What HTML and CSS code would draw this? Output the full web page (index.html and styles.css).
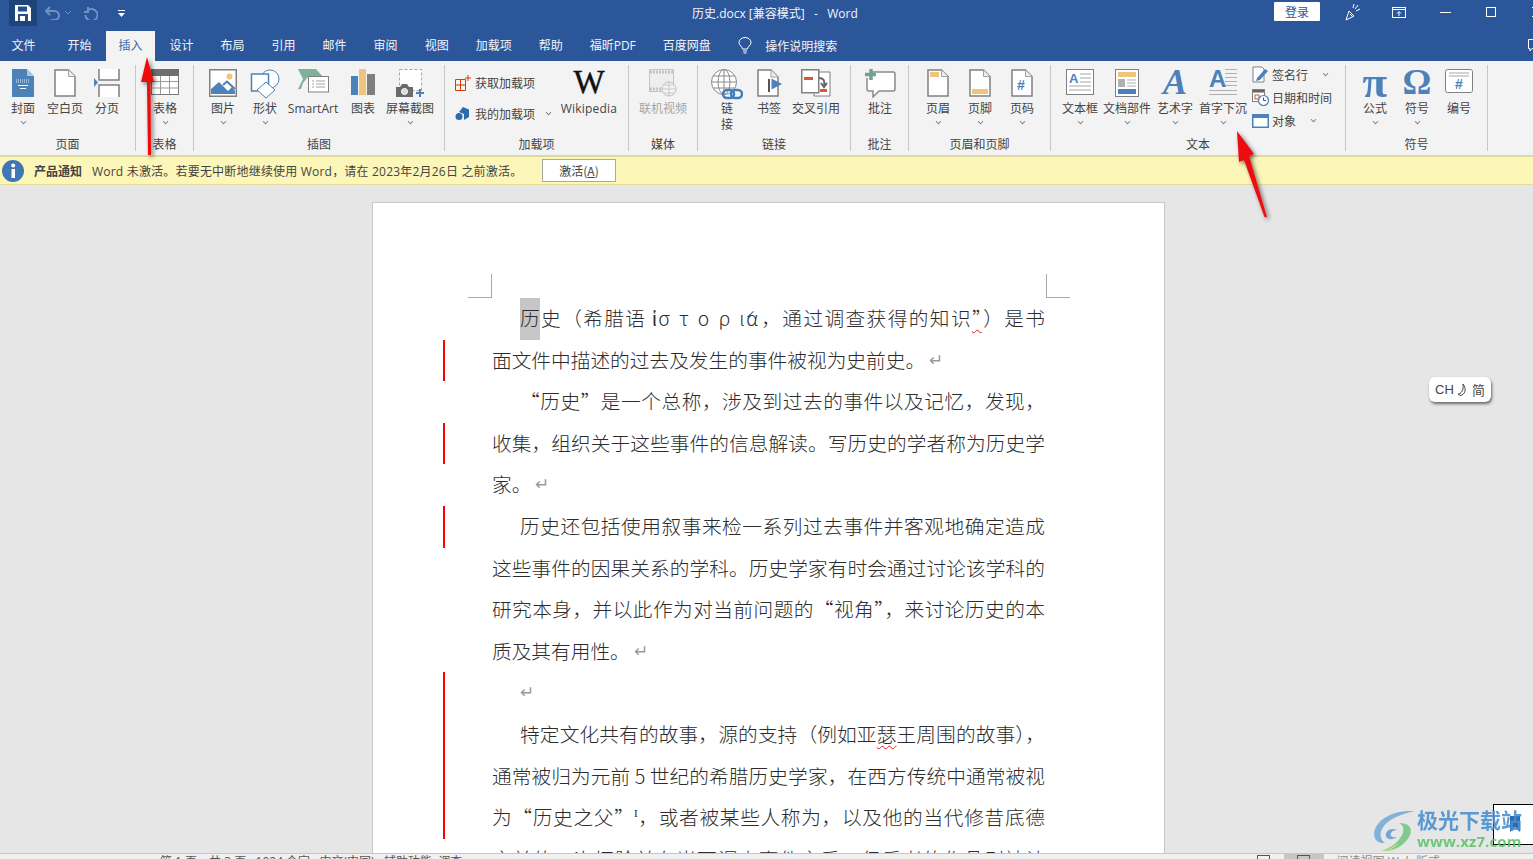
FILE: index.html
```html
<!DOCTYPE html>
<html lang="zh-CN">
<head>
<meta charset="utf-8">
<title>历史.docx [兼容模式] - Word</title>
<link rel="stylesheet" href="styles.css">
</head>
<body>
<div class="app">
  <header class="titlebar">
    <div class="qat">
      <div class="save">
        <svg width="16" height="16" viewBox="0 0 16 16"><path d="M0 0H13L16 3V16H0Z" fill="#fff"/><rect x="3" y="1.500" width="9" height="5" fill="#24508c"/><rect x="3" y="9" width="10" height="7" fill="#24508c"/><rect x="5" y="11" width="5" height="5" fill="#fff"/></svg>
      </div>
      <svg class="q-undo" width="15" height="14" viewBox="0 0 15 14"><path d="M5 1L1 5L5 9M1 5H9C12 5 14 7 14 9.500S12 14 9 14H6" fill="none" stroke="#7391bd" stroke-width="2"/></svg>
      <svg class="q-drop" width="6" height="4" viewBox="0 0 6 4"><path d="M0 0L3 3L6 0" fill="none" stroke="#7391bd"/></svg>
      <svg class="q-redo" width="14" height="14" viewBox="0 0 14 14"><path d="M4 1V6H0M3 5A6 6 0 1 1 1.500 9" fill="none" stroke="#7391bd" stroke-width="2"/></svg>
      <svg class="q-custom" width="7" height="7" viewBox="0 0 7 7"><rect width="7" height="1" fill="#fff"/><path d="M0 3H7L3.500 7Z" fill="#fff"/></svg>
    </div>
    <div class="doc-title">历史.docx [兼容模式]&nbsp;&nbsp; - &nbsp;&nbsp;Word</div>
    <div class="win">
      <button class="login">登录</button>
      <span class="wctl"><svg width="16" height="18" viewBox="0 0 16 18"><path d="M1 17L4 8L9 13Z" fill="none" stroke="#fff"/><path d="M5 11L7 13M10 6L13 2M11 8L15 6M8 5L9 1" stroke="#fff"/></svg></span>
      <span class="wctl"><svg width="14" height="11" viewBox="0 0 14 11"><rect x=".5" y=".5" width="13" height="10" fill="none" stroke="#fff"/><path d="M1 2.500H13" stroke="#fff"/><path d="M7 9V5M5 6.500L7 4.500L9 6.500" fill="none" stroke="#fff"/></svg></span>
      <span class="wctl"><svg width="11" height="1" viewBox="0 0 11 1"><rect width="11" height="1" fill="#fff"/></svg></span>
      <span class="wctl"><svg width="10" height="10" viewBox="0 0 10 10"><rect x=".5" y=".5" width="9" height="9" fill="none" stroke="#fff"/></svg></span>
      <span class="wctl"><svg width="10" height="10" viewBox="0 0 10 10"><path d="M0 0L10 10M10 0L0 10" stroke="#fff"/></svg></span>
    </div>
  </header>

  <nav class="tabs">
    <span class="tab tab-file">文件</span>
    <span class="tab">开始</span>
    <span class="tab active">插入</span>
    <span class="tab">设计</span>
    <span class="tab">布局</span>
    <span class="tab">引用</span>
    <span class="tab">邮件</span>
    <span class="tab">审阅</span>
    <span class="tab">视图</span>
    <span class="tab">加载项</span>
    <span class="tab">帮助</span>
    <span class="tab">福昕PDF</span>
    <span class="tab">百度网盘</span>
    <span class="search">
      <svg width="14" height="17" viewBox="0 0 14 17"><path d="M4.500 12C4.500 9.500 1 8.500 1 5.500A6 5 0 0 1 13 5.500C13 8.500 9.500 9.500 9.500 12Z" fill="none" stroke="#fff"/><path d="M5 14H9M5.500 16H8.500" stroke="#fff"/></svg>
      操作说明搜索
    </span>
    <svg class="share" width="10" height="13" viewBox="0 0 10 13"><path d="M.5 .5H9.500V9.500H4L2 12V9.500H.5Z" fill="none" stroke="#fff"/></svg>
  </nav>

  <section class="ribbon">
    <div class="group g-pages">
      <div class="items">
        <div class="btn w42"><svg class="ico" width="22" height="28" viewBox="0 0 22 28"><path d="M0 0H15L22 7V28H0Z" fill="#4d82b8"/><path d="M15.500 0L22 6.500H15.500Z" fill="#a9c4df" stroke="#f3f3f3" stroke-width=".5"/><path d="M4 11H18M4 13H18" stroke="#dfe9f3" stroke-dasharray="1 1"/><path d="M6 16.500H16M8 19.500H14" stroke="#fff"/></svg><span class="lbl">封面</span><i class="chev"></i></div>
        <div class="btn w42"><svg class="ico" width="22" height="28" viewBox="0 0 22 28"><path d="M1 1H14.500L21 7.500V27H1Z" fill="#fff" stroke="#808080" stroke-width="1.500"/><path d="M14.500 1V7.500H21" fill="#eee" stroke="#a0a0a0"/></svg><span class="lbl">空白页</span></div>
        <div class="btn w42"><svg class="ico" width="26" height="28" viewBox="0 0 26 28"><path d="M5 0V11H25V0" fill="#fff" stroke="#808080" stroke-width="1.500"/><path d="M5 28V16H25V28" fill="#fff" stroke="#808080" stroke-width="1.500"/><path d="M0 9L4 13.500L0 18Z" fill="#4d82b8"/></svg><span class="lbl">分页</span></div>
      </div>
      <div class="gname">页面</div>
    </div>

    <div class="group g-table">
      <div class="items">
        <div class="btn w56"><svg class="ico" width="28" height="26" viewBox="0 0 28 26"><rect x=".5" y=".5" width="27" height="25" fill="#fff" stroke="#7a7a7a"/><rect width="28" height="7" fill="#6e6e6e"/><path d="M1 12.500H27M1 19H27M9.500 7V25M18.500 7V25" stroke="#9a9a9a"/></svg><span class="lbl">表格</span><i class="chev"></i></div>
      </div>
      <div class="gname">表格</div>
    </div>

    <div class="group g-illus">
      <div class="items">
        <div class="btn w42"><svg class="ico" width="28" height="28" viewBox="0 0 28 28"><rect x=".75" y=".75" width="26.500" height="26.500" fill="#fff" stroke="#808080" stroke-width="1.500"/><circle cx="20.500" cy="7.500" r="3" fill="#efc47d"/><path d="M2 25V20L10 13L19 22L23 18L26 22V25Z" fill="#4d82b8"/><path d="M14 16L18 12.500L26 20" fill="none" stroke="#4d82b8" stroke-width="2"/></svg><span class="lbl">图片</span><i class="chev"></i></div>
        <div class="btn w42"><svg class="ico" width="30" height="30" viewBox="0 0 30 30"><circle cx="20" cy="10" r="9" fill="#fff" stroke="#4d82b8"/><rect x="1.500" y="5" width="17" height="17" fill="#fff" stroke="#4d82b8" stroke-width="1.500"/><path d="M16 13L25 21L16 29L7 21Z" fill="#fff" stroke="#4d82b8"/></svg><span class="lbl">形状</span><i class="chev"></i></div>
        <div class="btn w54"><svg class="ico" width="31" height="24" viewBox="0 0 31 24"><path d="M0 0H18L25 8H10L5 14L3 20H0L5 10Z" fill="#7fb09b"/><rect x="10.500" y="7.500" width="20" height="15.500" fill="#fff" stroke="#808080"/><path d="M14 12H16M18 12H27M14 15H16M18 15H27M14 18H16M18 18H27" stroke="#a0a0a0"/></svg><span class="lbl">SmartArt</span></div>
        <div class="btn w46"><svg class="ico" width="24" height="26" viewBox="0 0 24 26"><rect y="7" width="7" height="19" fill="#4d82b8"/><rect x="8" width="7" height="26" fill="#efc47d"/><rect x="16" y="5" width="8" height="21" fill="#7f7f7f"/></svg><span class="lbl">图表</span></div>
        <div class="btn w48"><svg class="ico" width="30" height="29" viewBox="0 0 30 29"><rect x="4.500" y=".5" width="22" height="21" fill="#fff" stroke="#a6a6a6" stroke-dasharray="3 2"/><path d="M1 18H5L7 15H12L14 18H18V28H1Z" fill="#6b6b6b"/><circle cx="9.500" cy="22.500" r="3" fill="#d8d8d8" stroke="#fff"/><path d="M25 20V28M21 24H29" stroke="#4d82b8" stroke-width="2"/></svg><span class="lbl">屏幕截图</span><i class="chev"></i></div>
      </div>
      <div class="gname">插图</div>
    </div>

    <div class="group g-addin">
      <div class="items">
        <div class="smallcol">
          <div class="sm"><svg width="16" height="16" viewBox="0 0 16 16"><path d="M.5 4.500H10.500V15.500H.5ZM.5 10H10.500M5.500 4.500V15.500" fill="none" stroke="#d83b01"/><path d="M13 0V6M10 3H16" stroke="#d83b01"/></svg><span>获取加载项</span></div>
          <div class="sm"><svg width="16" height="16" viewBox="0 0 16 16"><path d="M8 1L14 3.500V11L9 14V8L4 6Z" fill="#2b6cb0"/><circle cx="4" cy="10.500" r="3.500" fill="#2b6cb0"/></svg><span>我的加载项</span><i class="chev inline"></i></div>
        </div>
        <div class="btn w70 wiki"><span class="ico-t w-glyph">W</span><span class="lbl">Wikipedia</span></div>
      </div>
      <div class="gname">加载项</div>
    </div>

    <div class="group g-media">
      <div class="items">
        <div class="btn w56 off"><svg class="ico" width="28" height="28" viewBox="0 0 28 28"><rect x=".5" y=".5" width="24" height="22" fill="#eee" stroke="#c4c4c4"/><path d="M1 3H24M1 20H24" stroke="#c4c4c4" stroke-width="3" stroke-dasharray="2 1"/><circle cx="20" cy="20" r="7" fill="#f3f3f3" stroke="#c0c0c0"/><path d="M13 20H27M20 13V27M15 16H25M15 24H25" stroke="#c0c0c0" stroke-width=".8"/></svg><span class="lbl">联机视频</span></div>
      </div>
      <div class="gname">媒体</div>
    </div>

    <div class="group g-links">
      <div class="items">
        <div class="btn w42"><svg class="ico" width="32" height="31" viewBox="0 0 32 31"><circle cx="13" cy="13" r="12.500" fill="#fff" stroke="#8a8a8a"/><ellipse cx="13" cy="13" rx="6" ry="12.500" fill="none" stroke="#8a8a8a"/><path d="M.5 13H25.500M2 7H24M2 19H24M13 0V26" stroke="#8a8a8a"/><rect x="12" y="21" width="11" height="8" rx="4" fill="none" stroke="#3f7fbc" stroke-width="2.500"/><rect x="20" y="21" width="11" height="8" rx="4" fill="none" stroke="#3f7fbc" stroke-width="2.500"/></svg><span class="lbl">链<br>接</span></div>
        <div class="btn w42"><svg class="ico" width="25" height="28" viewBox="0 0 25 28"><path d="M1 1H14L21 8V27H1Z" fill="#fff" stroke="#808080" stroke-width="1.500"/><path d="M14 1V8H21" fill="#eee" stroke="#a0a0a0"/><rect x="11" y="10" width="2" height="13" fill="#555"/><path d="M14.500 9.500L25 15L14.500 20.500Z" fill="#4d82b8"/></svg><span class="lbl">书签</span></div>
        <div class="btn w52"><svg class="ico" width="30" height="28" viewBox="0 0 30 28"><path d="M13 3H29V27H13Z" fill="#fff" stroke="#808080"/><rect x=".75" y=".75" width="17" height="23" fill="#fff" stroke="#808080" stroke-width="1.500"/><rect x="3" y="8" width="9" height="3" fill="#d9573a"/><rect x="19" y="20" width="7" height="3" fill="#d9573a"/><path d="M18 9C23 9 24 12 23 17M20 14L23 18L26 14" fill="none" stroke="#666" stroke-width="2"/></svg><span class="lbl">交叉引用</span></div>
      </div>
      <div class="gname">链接</div>
    </div>

    <div class="group g-comment">
      <div class="items">
        <div class="btn w56"><svg class="ico" width="31" height="29" viewBox="0 0 31 29"><path d="M7 3H28Q30 3 30 5V20Q30 22 28 22H14L8 28V22H4Q2 22 2 20V9" fill="#fff" stroke="#8a8a8a" stroke-width="1.500"/><path d="M6 0V11M0 5.500H11" stroke="#6fa38c" stroke-width="3.500"/></svg><span class="lbl">批注</span></div>
      </div>
      <div class="gname">批注</div>
    </div>

    <div class="group g-hf">
      <div class="items">
        <div class="btn w42"><svg class="ico" width="22" height="28" viewBox="0 0 22 28"><path d="M1 1H14.500L21 7.500V27H1Z" fill="#fff" stroke="#808080" stroke-width="1.500"/><path d="M14.500 1V7.500H21" fill="#eee" stroke="#a0a0a0"/><rect x="3" y="3" width="9" height="5" fill="#efc47d"/></svg><span class="lbl">页眉</span><i class="chev"></i></div>
        <div class="btn w42"><svg class="ico" width="22" height="28" viewBox="0 0 22 28"><path d="M1 1H14.500L21 7.500V27H1Z" fill="#fff" stroke="#808080" stroke-width="1.500"/><path d="M14.500 1V7.500H21" fill="#eee" stroke="#a0a0a0"/><rect x="3" y="20" width="16" height="5" fill="#efc47d"/></svg><span class="lbl">页脚</span><i class="chev"></i></div>
        <div class="btn w42"><svg class="ico" width="22" height="28" viewBox="0 0 22 28"><path d="M1 1H14.500L21 7.500V27H1Z" fill="#fff" stroke="#808080" stroke-width="1.500"/><path d="M14.500 1V7.500H21" fill="#eee" stroke="#a0a0a0"/><text x="10" y="21" class="hash">#</text></svg><span class="lbl">页码</span><i class="chev"></i></div>
      </div>
      <div class="gname">页眉和页脚</div>
    </div>

    <div class="group g-text">
      <div class="items">
        <div class="btn w44"><svg class="ico" width="28" height="26" viewBox="0 0 28 26"><rect x=".5" y=".5" width="27" height="25" fill="#fff" stroke="#808080"/><text x="3" y="14" class="boxa">A</text><path d="M14 5H25M14 9H25M14 13H25M3 17H25M3 21H25" stroke="#a6a6a6"/></svg><span class="lbl">文本框</span><i class="chev"></i></div>
        <div class="btn w50"><svg class="ico" width="24" height="28" viewBox="0 0 24 28"><rect x=".5" y=".5" width="23" height="27" fill="#fff" stroke="#808080"/><rect x="3" y="3" width="18" height="5" fill="#efc47d"/><rect x="3" y="10" width="7" height="8" fill="#b0b0b0"/><path d="M12 11H21M12 14H21M12 17H21" stroke="#b0b0b0"/><rect x="3" y="20" width="18" height="5" fill="#4d82b8"/></svg><span class="lbl">文档部件</span><i class="chev"></i></div>
        <div class="btn w46 art"><span class="ico-t art-a">A</span><span class="lbl">艺术字</span><i class="chev"></i></div>
        <div class="btn w50 drop"><span class="ico-t drop-a"><span class="drop-l">A</span></span><span class="lbl">首字下沉</span><i class="chev"></i></div>
        <div class="smallcol tight">
          <div class="sm"><svg width="17" height="17" viewBox="0 0 17 17"><path d="M1 1H10L12 3V16H1Z" fill="#fff" stroke="#808080"/><path d="M5 12L13 3L16 5L8 14L4 15Z" fill="#4d82b8"/></svg><span>签名行</span><i class="chev inline wide"></i></div>
          <div class="sm"><svg width="17" height="17" viewBox="0 0 17 17"><rect x=".5" y=".5" width="12" height="12" fill="#fff" stroke="#808080"/><rect x="1" y="1" width="11" height="2.500" fill="#666"/><rect x="3" y="6" width="4" height="4" fill="none" stroke="#d9573a"/><circle cx="11.500" cy="11.500" r="5" fill="#fff" stroke="#4d82b8" stroke-width="1.200"/><path d="M11.500 8.500V11.500H14" fill="none" stroke="#555"/></svg><span>日期和时间</span></div>
          <div class="sm"><svg width="17" height="14" viewBox="0 0 17 14"><rect x=".75" y=".75" width="15.500" height="12.500" fill="#fff" stroke="#4d82b8" stroke-width="1.500"/><rect y="0" width="17" height="4" fill="#4d82b8"/></svg><span>对象</span><i class="chev inline wide"></i></div>
        </div>
      </div>
      <div class="gname">文本</div>
    </div>

    <div class="group g-symbol">
      <div class="items">
        <div class="btn w42"><span class="ico-t sym pi">π</span><span class="lbl">公式</span><i class="chev"></i></div>
        <div class="btn w42"><span class="ico-t sym">Ω</span><span class="lbl">符号</span><i class="chev"></i></div>
        <div class="btn w42"><svg class="ico" width="28" height="24" viewBox="0 0 28 24"><rect x=".5" y=".5" width="27" height="23" rx="2" fill="#fff" stroke="#808080"/><path d="M4 4H24M4 7H24" stroke="#a6a6a6"/><text x="14" y="20" class="hash">#</text></svg><span class="lbl">编号</span></div>
      </div>
      <div class="gname">符号</div>
    </div>
  </section>

  <div class="notice">
    <svg width="22" height="22" viewBox="0 0 22 22"><circle cx="11" cy="11" r="11" fill="#3f77b5"/><rect x="9.500" y="9" width="3.500" height="9" fill="#fff"/><circle cx="11.200" cy="5.500" r="2" fill="#fff"/></svg>
    <b class="n-head">产品通知</b>
    <span class="n-text">Word 未激活。若要无中断地继续使用 Word，请在 2023年2月26日 之前激活。</span>
    <button class="n-btn">激活(<u>A</u>)</button>
  </div>

  <main class="workspace">
    <article class="page">
      <i class="crop crop-l"></i><i class="crop crop-r"></i>
      <div class="ln in2"><span class="hl">历</span>史（希腊语 <span class="greek">ἱσ τ ο ρ ία</span>，通过调查获得的知识<span class="wavy">”</span>）是书</div>
      <div class="ln free chg">面文件中描述的过去及发生的事件被视为史前史。<span class="pm">↵</span></div>
      <div class="ln in2">“历史”是一个总称，涉及到过去的事件以及记忆，发现，</div>
      <div class="ln chg">收集，组织关于这些事件的信息解读。写历史的学者称为历史学</div>
      <div class="ln free">家。<span class="pm">↵</span></div>
      <div class="ln in2 chg">历史还包括使用叙事来检一系列过去事件并客观地确定造成</div>
      <div class="ln">这些事件的因果关系的学科。历史学家有时会通过讨论该学科的</div>
      <div class="ln">研究本身，并以此作为对当前问题的“视角”，来讨论历史的本</div>
      <div class="ln free">质及其有用性。<span class="pm">↵</span></div>
      <div class="ln free in2 chg"><span class="pm first">↵</span></div>
      <div class="ln in2 chg">特定文化共有的故事，源的支持（例如亚<span class="wavy">瑟</span>王周围的故事），</div>
      <div class="ln chg">通常被归为元前 5 世纪的希腊历史学家，在西方传统中通常被视</div>
      <div class="ln chg">为“历史之父”<sup class="sup">I</sup>，或者被某些人称为，以及他的当代修昔底德</div>
      <div class="ln">之前的一次探险并在当下调查事件之后，但后者的作品则被认</div>
    </article>
  </main>

  <footer class="status">
    <span class="st-text">第 1 页，共 3 页 &nbsp; 1024 个字 &nbsp; 中文(中国) &nbsp; 辅助功能: 调查</span>
    <span class="st-view"><i class="st-ico"></i></span>
    <span class="st-view on"><i class="st-ico"></i></span>
    <span class="st-text st-r">阅读视图 Web 版式</span>
  </footer>
</div>

<svg class="arrow a1" width="22" height="104" viewBox="0 0 22 104"><path d="M8 2L15 27H11.500L12 100H9L8 27H2Z" fill="#f00a0a"/></svg>
<svg class="arrow a2" width="44" height="92" viewBox="0 0 44 92"><path d="M4 2L21 25L16 27L34 88L31.500 88L11 31L6 33Z" fill="#ee0c10"/></svg>

<div class="ch">CH <svg width="12" height="14" viewBox="0 0 12 14"><path d="M6 1C9 4 9 10 5 12C4 13 2 12 1 11C4 11 7 7 6 1Z" fill="none" stroke="#444"/></svg> 简</div>

<div class="corner-box"><svg width="10" height="16" viewBox="0 0 10 16"><path d="M0 0H10V16L5 11L0 16Z" fill="#2b6cb0"/></svg></div>

<div class="mark">
  <svg class="mark-logo" width="44" height="42" viewBox="0 0 44 42"><path d="M42 1C26 0 8 5 2 19C-1 28 4 34 12 33C8 30 6 25 9 19C14 9 28 4 42 1Z" fill="#5b9bd5" opacity=".8"/><path d="M9 41C22 42 33 34 37 25C40 17 35 13 26 13C30 15 32 19 29 25C25 33 17 38 9 41Z" fill="#5cc26c" opacity=".85"/><path d="M24 20C18 17 12 21 13 26C14 30 20 30 24 27C20 28 16 26 18 23C19 21 21 20 24 20Z" fill="#4a8fd0" opacity=".85"/><path d="M9 41C14 40 19 38 23 35L26 33C22 38 16 41 9 41Z" fill="#e8df5c"/></svg>
  <div class="mark-t">
    <div class="mark-a">极光下载站</div>
    <div class="mark-b">www.xz7.com</div>
  </div>
</div>
</body>
</html>
```

FILE: styles.css
```css
* { box-sizing: border-box; }
html, body { margin: 0; height: 100%; overflow: hidden; }
body {
  font-family: "Open Sans", "Noto Sans CJK SC", sans-serif;
  font-size: 12px;
  color: #444;
  background: #e6e6e6;
  position: relative;
}
.app { display: flex; flex-direction: column; height: 859px; width: 1533px; overflow: hidden; }

/* title bar */
.titlebar { flex: 0 0 31px; height: 31px; background: #2b579a; display: flex; color: #fff; }
.qat { flex: 0 0 692px; display: flex; align-items: flex-start; padding-left: 9px; }
.save { width: 28px; height: 26px; background: #1f4478; display: flex; align-items: center; justify-content: center; }
.q-undo { margin: 6px 0 0 8px; }
.q-drop { margin: 11px 0 0 5px; }
.q-redo { margin: 6px 0 0 13px; }
.q-custom { margin: 10px 0 0 20px; }
.doc-title { flex: 0 0 172px; font-size: 12px; line-height: 28px; white-space: nowrap; color: #f2f5fa; }
.win { margin-left: auto; margin-right: -27px; display: flex; align-items: flex-start; }
.login { width: 46px; height: 19px; margin: 2px 10px 0 0; border: 0; border-radius: 1px; padding: 0; background: #fff; color: #2b579a; font: 12px/19px "Noto Sans CJK SC", sans-serif; }
.wctl { width: 46px; height: 24px; display: flex; align-items: center; justify-content: center; }

/* tabs */
.tabs { flex: 0 0 30px; height: 30px; background: #2b579a; display: flex; gap: 2px; color: #f2f5fa; align-items: stretch; }
.tab { width: auto; padding: 0 12.5px; line-height: 30px; white-space: nowrap; }
.tab-file { padding: 0 11.5px; margin-right: 6px; }
.tab.active { background: #f3f3f3; color: #3d6ba8; }
.search { margin-left: 13px; display: flex; align-items: center; gap: 13px; height: 29px; white-space: nowrap; }
.share { margin: 8px -5px 0 auto; }

/* ribbon */
.ribbon {
  flex: 0 0 94px;
  height: 94px;
  background: #f3f3f3;
  padding: 4px 0;
  display: grid;
  grid-template-columns: 136px 58px 251px 184px 69px 153px 58px 142px 295px 142px;
}
.group { border-right: 1px solid #c6c6c6; display: flex; flex-direction: column; height: 86px; }
.items { flex: 1; display: flex; min-height: 0; }
.gname { flex: 0 0 14px; text-align: center; line-height: 14px; color: #444; white-space: nowrap; position: relative; top: 1px; }
.g-pages .items { padding-left: 2px; }
.g-table .items { padding-left: 1px; }
.g-illus .items { padding-left: 8px; }
.g-addin .items { padding-left: 10px; }
.g-media .items { padding-left: 6px; }
.g-links .items { padding-left: 8px; }
.g-comment .items { padding-left: 1px; }
.g-hf .items { padding-left: 8px; }
.g-text .items { padding-left: 7px; }
.g-symbol .items { padding-left: 8px; }
.btn { display: flex; flex-direction: column; align-items: center; position: relative; padding-top: 1px; flex: none; }
.w42 { width: 42px; } .w44 { width: 44px; } .w46 { width: 46px; } .w48 { width: 48px; }
.w50 { width: 50px; } .w52 { width: 52px; } .w54 { width: 54px; } .w56 { width: 56px; } .w70 { width: 70px; }
.ico, .ico-t { flex: 0 0 33px; height: 33px; display: block; }
svg.ico { margin: 3px 0 0; flex: none; height: auto; }
.lbl { position: absolute; top: 36px; left: -4px; right: -4px; text-align: center; line-height: 16px; white-space: nowrap; color: #444; }
.off .lbl { color: #a6a6a6; }
.chev { position: absolute; top: 54px; left: 50%; margin-left: -2.500px; width: 5px; height: 5px; border-right: 1px solid #666; border-bottom: 1px solid #666; transform: rotate(45deg) scale(.8); }
.chev.inline { position: static; display: inline-block; margin: 0 0 3px 7px; }
.chev.inline.wide { margin-left: 12px; }
.smallcol { display: flex; flex-direction: column; flex: none; width: 99px; padding-top: 10px; gap: 15px; }
.smallcol .sm { display: flex; align-items: center; gap: 4px; height: 16px; white-space: nowrap; }
.smallcol.tight { padding: 1px 0 0 4px; gap: 6px; width: 96px; }
.smallcol.tight .sm { height: 17px; gap: 3px; }
.w-glyph { font: 400 33px/33px "Liberation Serif", serif; color: #111; -webkit-text-stroke: .4px #111; }
.wiki .lbl { letter-spacing: .2px; }
.hash { font: 700 14px "Liberation Sans", sans-serif; fill: #4d82b8; text-anchor: middle; }
.boxa { font: 700 13px "Liberation Sans", sans-serif; fill: #4d82b8; }
.art-a { font: italic 700 36px/33px "Liberation Serif", serif; color: #4d82b8; }
.drop-a { width: 28px; height: 29px; margin-top: 3px; position: relative; background:
  repeating-linear-gradient(#b0b0b0 0 1px, transparent 1px 4px) 0 21px / 100% 8px no-repeat,
  repeating-linear-gradient(#b0b0b0 0 1px, transparent 1px 4px) 16px 0 / 12px 20px no-repeat; flex: none; }
.drop-l { font: 700 24px/20px "Liberation Sans", sans-serif; color: #4d82b8; display: block; }
.sym { font: 700 36px/33px "Liberation Serif", serif; color: #4d82b8; }
.sym.pi { transform: scale(1.25); }

/* notice */
.notice {
  flex: 0 0 30px; height: 30px;
  background: #fdf6b9;
  border-top: 2px solid #dfd99c;
  border-bottom: 1px solid #e3dc98;
  display: flex; align-items: center;
  padding-left: 2px; white-space: nowrap;
}
.n-head { margin-left: 10px; color: #444; font-weight: 700; }
.n-text { margin-left: 10px; flex: 0 0 460px; letter-spacing: .2px; }
.n-btn { margin-left: -10px; width: 74px; height: 23px; background: #fff; border: 1px solid #a9a9a9; padding: 0; font: 12px "Noto Sans CJK SC", sans-serif; color: #444; }

/* document */
.workspace { flex: 1; min-height: 0; overflow: hidden; padding: 17px 0 0 372px; background: #e6e6e6; }
.page {
  width: 793px; height: 900px;
  background: #fff;
  border: 1px solid #c9c9c9;
  padding: 94px 119px 0 119px;
  position: relative;
  font-family: "Noto Sans CJK SC", sans-serif;
  font-size: 19.700px;
  font-weight: 300;
  color: #2c2c2c;
}
.ln { height: 41.600px; line-height: 41.600px; position: relative; text-align: justify; text-align-last: justify; white-space: nowrap; }
.ln.free { text-align-last: left; }
.in2 { padding-left: 28px; }
.hl { background: #c6c6c6; display: inline-block; height: 41.600px; line-height: 39.600px; }
.greek { letter-spacing: 1.700px; }
.wavy { text-decoration: underline wavy #e02020 1px; text-underline-offset: 3px; }
.pm { font-family: "DejaVu Sans", sans-serif; color: #9a9a9a; font-size: 17px; margin-left: 4px; vertical-align: 2px; }
.pm.first { margin-left: 0; }
.sup { font: 11px/0 "Liberation Serif", serif; vertical-align: 8px; color: #222; }
.chg::before { content: ""; position: absolute; left: -49px; top: 1px; bottom: -1px; width: 2px; background: #f00; }
.crop { position: absolute; width: 24px; height: 24px; top: 71px; border-bottom: 1px solid #a9a9a9; }
.crop-l { left: 95px; border-right: 1px solid #a9a9a9; }
.crop-r { left: 673px; border-left: 1px solid #a9a9a9; }

/* status */
.status { flex: 0 0 6px; height: 6px; background: #f1f1f1; border-top: 1px solid #c6c6c6; display: flex; overflow: hidden; position: relative; z-index: 1; padding-left: 160px; }
.st-text { line-height: 14px; margin-top: 1px; color: #555; white-space: nowrap; flex: 0 0 auto; }
.st-view { width: 40px; height: 14px; display: flex; justify-content: center; }
.status .st-view:nth-of-type(2) { margin-left: auto; }
.st-view.on { background: #c6c6c6; }
.st-ico { width: 13px; height: 10px; border: 1px solid #555; margin-top: 1px; }
.st-r { margin: 1px 93px 0 13px; color: #888; }

/* overlays */
.arrow { position: absolute; filter: drop-shadow(2px 2px 2px rgba(0,0,0,.55)); }
.a1 { left: 139px; top: 55px; }
.a2 { left: 1233px; top: 129px; }
.ch { position: absolute; left: 1429px; top: 377px; width: 62px; height: 25px; background: #fff; border-radius: 6px; box-shadow: 1px 2px 3px rgba(0,0,0,.55); display: flex; align-items: center; justify-content: center; gap: 3px; font: 13px "Liberation Sans", "Noto Sans CJK SC", sans-serif; color: #444; white-space: nowrap; }
.corner-box { position: absolute; left: 1493px; top: 804px; width: 44px; height: 41px; background: #fff; border: 1px solid #000; padding: 11px 0 0 16px; }
.mark { position: absolute; left: 1373px; top: 807px; display: flex; opacity: .88; }
.mark-logo { margin-top: 3px; }
.mark-a { font: 700 21px/25px "Noto Sans CJK SC", sans-serif; color: #4a8fd0; white-space: nowrap; }
.mark-b { font: 700 15px/18px "Open Sans", sans-serif; color: #5cc26c; white-space: nowrap; letter-spacing: .1px; }
```
